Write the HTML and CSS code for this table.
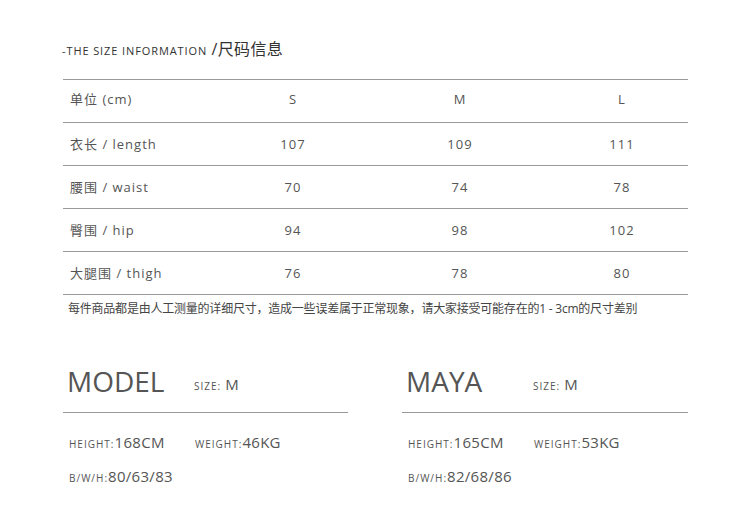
FILE: index.html
```html
<!DOCTYPE html>
<html lang="zh">
<head>
<meta charset="utf-8">
<link rel="stylesheet" href="styles.css">
</head>
<body>
<div class="page">
  <div class="title"><span class="title-en">-THE SIZE INFORMATION</span><span class="title-cn"> /尺码信息</span></div>
  <div class="table">
    <div class="row head">
      <div class="cell label">单位 (cm)</div><div class="cell">S</div><div class="cell">M</div><div class="cell last">L</div>
    </div>
    <div class="row">
      <div class="cell label">衣长 / length</div><div class="cell">107</div><div class="cell">109</div><div class="cell last">111</div>
    </div>
    <div class="row">
      <div class="cell label">腰围 / waist</div><div class="cell">70</div><div class="cell">74</div><div class="cell last">78</div>
    </div>
    <div class="row">
      <div class="cell label">臀围 / hip</div><div class="cell">94</div><div class="cell">98</div><div class="cell last">102</div>
    </div>
    <div class="row">
      <div class="cell label">大腿围 / thigh</div><div class="cell">76</div><div class="cell">78</div><div class="cell last">80</div>
    </div>
  </div>
  <p class="note">每件商品都是由人工测量的详细尺寸，造成一些误差属于正常现象，请大家接受可能存在的1 - 3cm的尺寸差别</p>
  <div class="models">
    <div class="model">
      <div class="model-head">
        <div class="model-name">MODEL</div>
        <div class="model-size"><span class="sm">SIZE:</span> <span class="big">M</span></div>
      </div>
      <div class="stats">
        <div class="stat"><span class="sm">HEIGHT:</span><span class="big">168CM</span></div>
        <div class="stat"><span class="sm">WEIGHT:</span><span class="big">46KG</span></div>
        <div class="stat"><span class="sm">B/W/H:</span><span class="big">80/63/83</span></div>
      </div>
    </div>
    <div class="model">
      <div class="model-head">
        <div class="model-name">MAYA</div>
        <div class="model-size"><span class="sm">SIZE:</span> <span class="big">M</span></div>
      </div>
      <div class="stats">
        <div class="stat"><span class="sm">HEIGHT:</span><span class="big">165CM</span></div>
        <div class="stat"><span class="sm">WEIGHT:</span><span class="big">53KG</span></div>
        <div class="stat"><span class="sm">B/W/H:</span><span class="big">82/68/86</span></div>
      </div>
    </div>
  </div>
</div>
</body>
</html>
```
FILE: styles.css
```css
* { box-sizing: border-box; }
html, body { margin: 0; padding: 0; background: #fff; }
body {
  font-family: "Open Sans", "Noto Sans CJK SC", sans-serif;
  color: #555;
}
.page {
  width: 625px;
  margin-left: 63px;
}
.title {
  padding-top: 38px;
  height: 79px;
  line-height: 22px;
  color: #333;
  margin-left: -1px;
}
.title-en { font-size: 11px; letter-spacing: 0.9px; }
.title-cn { font-size: 16px; letter-spacing: 0.3px; }
.table { border-top: 1px solid #999; }
.row {
  display: grid;
  grid-template-columns: 147px 166px 168px 144px;
  height: 43px;
  padding-bottom: 1px;
  border-bottom: 1px solid #999;
  align-items: center;
  font-size: 13px;
  letter-spacing: 1px;
}
.row.head { padding-bottom: 5px; }
.cell { text-align: center; }
.cell.label { text-align: left; padding-left: 7px; }
.cell.last { padding-left: 12px; }
.note {
  margin: 5px 0 0 5px;
  font-size: 12px;
  line-height: 18px;
  letter-spacing: -0.22px;
  color: #444;
  white-space: nowrap;
}
.models {
  margin-top: 45px;
  display: grid;
  grid-template-columns: 285px 286px;
  column-gap: 54px;
}
.model-head {
  display: flex;
  align-items: baseline;
  padding-left: 4px;
  padding-bottom: 13px;
  border-bottom: 1px solid #999;
}
.model-name {
  width: 127px;
  font-size: 28px;
  line-height: 36px;
  letter-spacing: 0;
}
.model-size { position: relative; top: -2px; }
.sm { font-size: 10px; letter-spacing: 1px; }
.big { font-size: 15px; letter-spacing: 0.3px; }
.stats {
  display: grid;
  grid-template-columns: 126px 1fr;
  row-gap: 12px;
  padding: 19px 0 0 6px;
  line-height: 20px;
}
.stat { white-space: nowrap; }
```
